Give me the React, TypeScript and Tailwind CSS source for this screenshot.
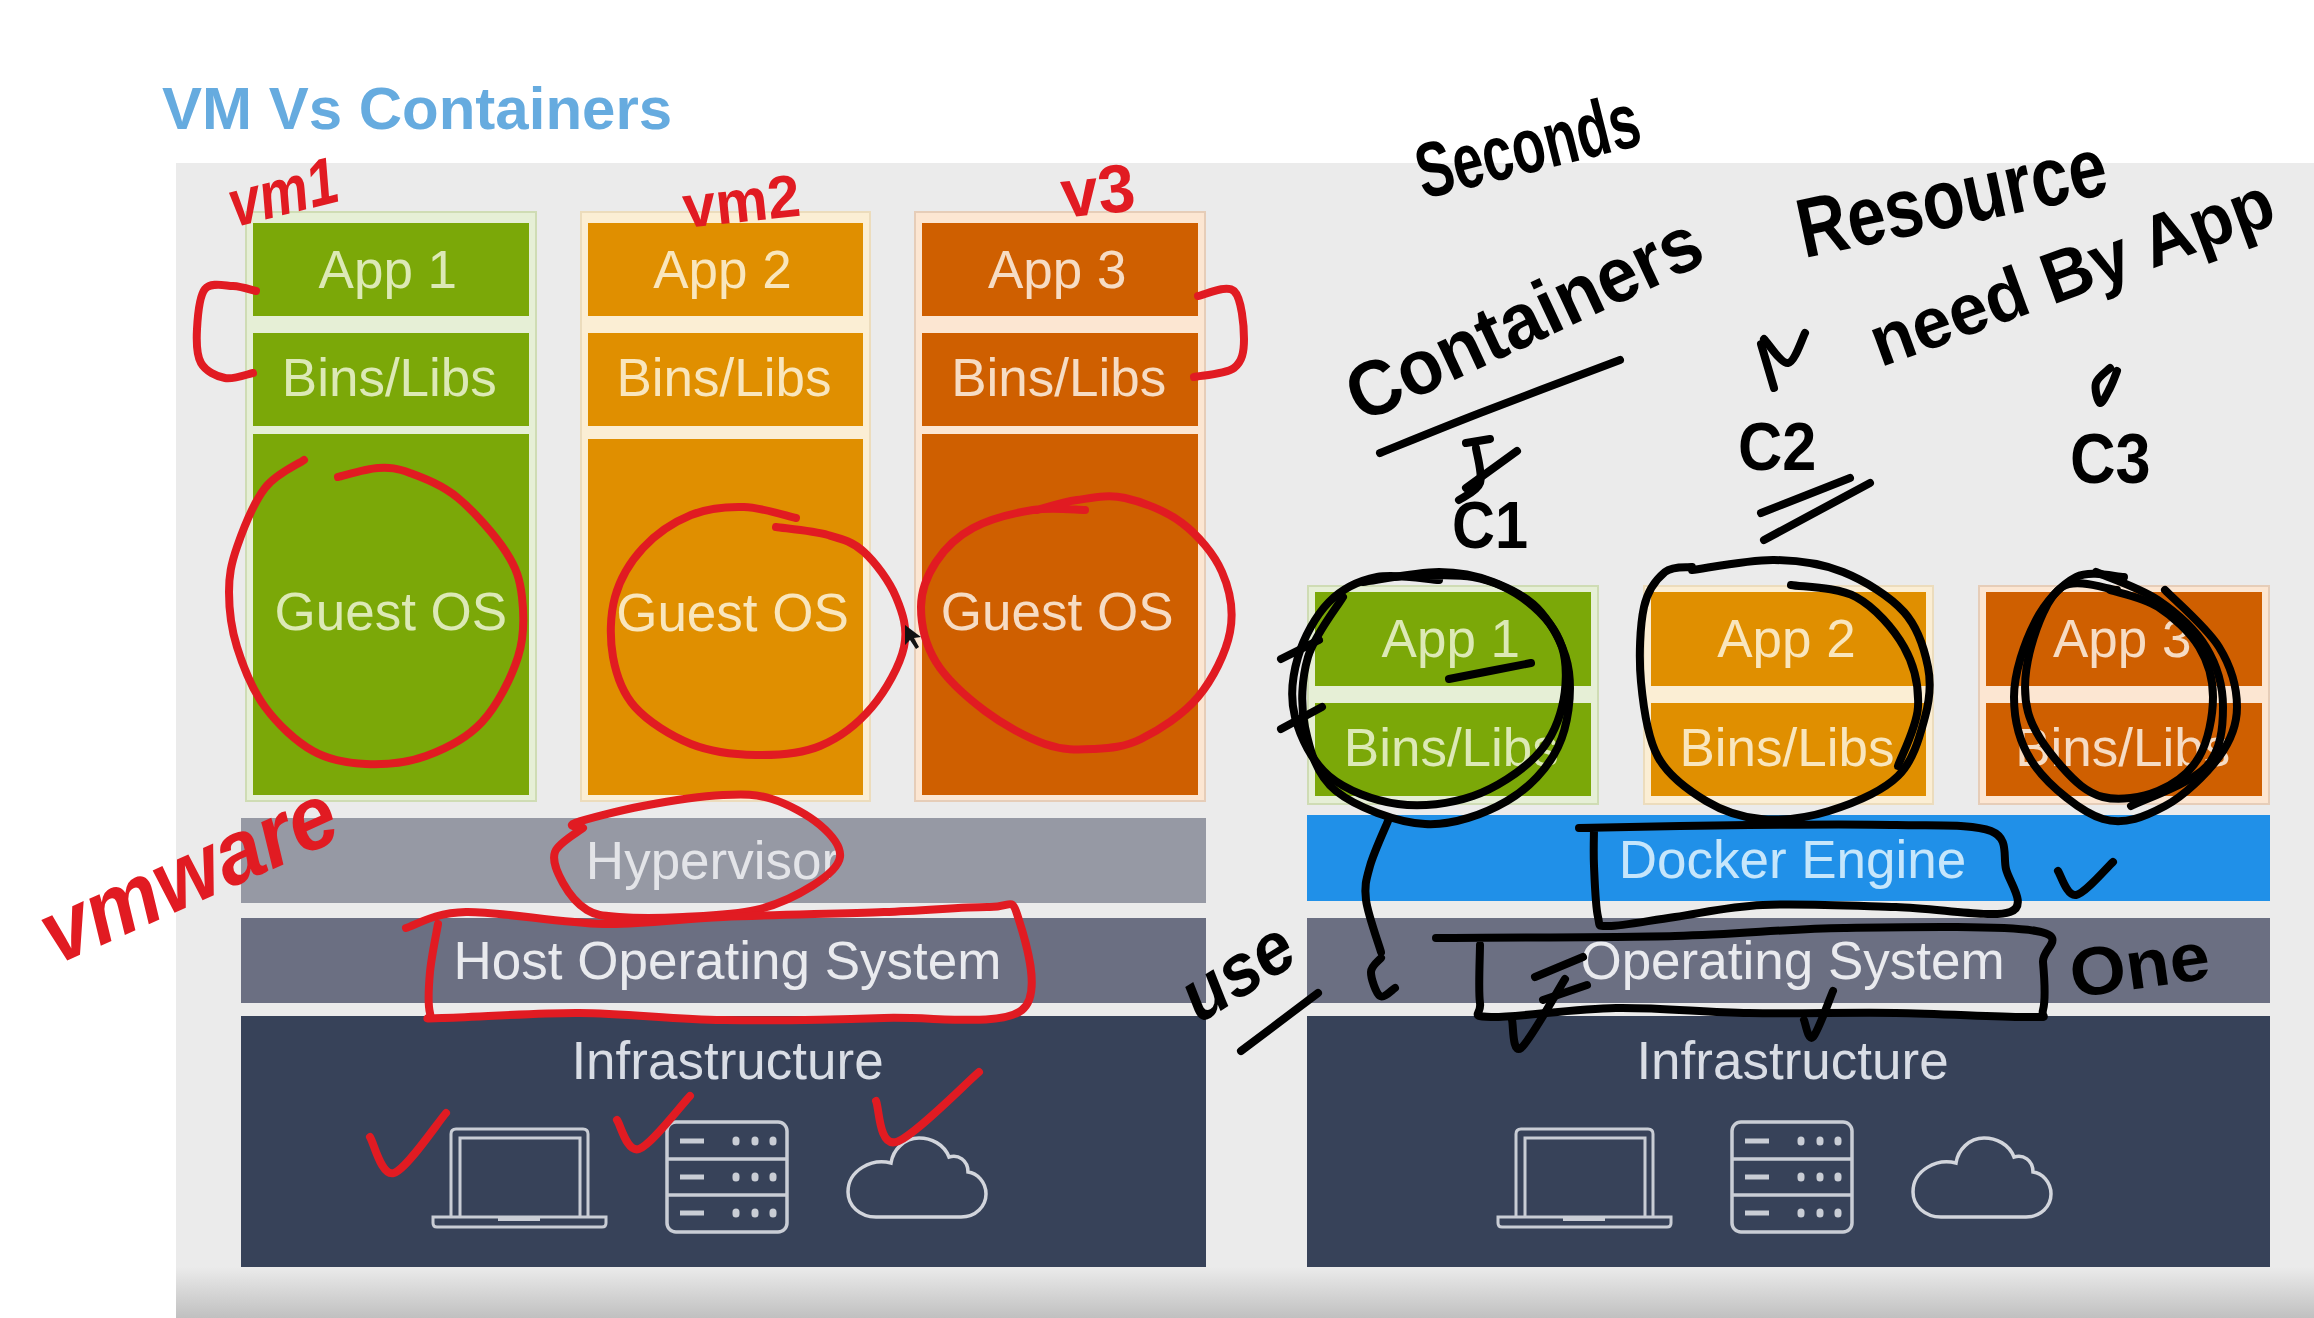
type Pt = [number, number];

// catmull-rom through the sampled ink points
const ink = (pts: Pt[]) => {
  let d = `M${pts[0][0]} ${pts[0][1]}`;
  for (let i = 0; i < pts.length - 1; i++) {
    const p0 = pts[i - 1] ?? pts[i];
    const p1 = pts[i];
    const p2 = pts[i + 1];
    const p3 = pts[i + 2] ?? p2;
    const c1x = p1[0] + (p2[0] - p0[0]) / 6;
    const c1y = p1[1] + (p2[1] - p0[1]) / 6;
    const c2x = p2[0] - (p3[0] - p1[0]) / 6;
    const c2y = p2[1] - (p3[1] - p1[1]) / 6;
    d += ` C${c1x} ${c1y} ${c2x} ${c2y} ${p2[0]} ${p2[1]}`;
  }
  return d;
};

const redStrokes: Pt[][] = [
  [[304,460],[265,488],[237,547],[229,592],[237,647],[265,707],[313,751],[366,764],[426,756],[482,722],[518,657],[522,597],[506,552],[458,498],[410,473],[378,468],[338,477]],
  [[796,518],[744,507],[691,515],[643,548],[615,597],[613,657],[635,707],[691,744],[756,755],[820,746],[872,707],[904,647],[896,597],[864,552],[828,535],[776,527]],
  [[1085,510],[1033,510],[973,528],[936,562],[921,607],[936,662],[985,711],[1045,744],[1093,749],[1141,739],[1198,697],[1230,632],[1222,572],[1182,523],[1125,498],[1077,500],[1037,510]],
  [[256,291],[233,286],[205,289],[197,329],[201,363],[225,378],[253,373]],
  [[1198,296],[1234,291],[1244,339],[1234,368],[1194,377]],
  [[583,828],[575,823],[643,806],[723,795],[772,799],[820,825],[840,857],[812,886],[756,910],[683,917],[619,917],[587,910],[563,883],[555,852],[583,828]],
  [[406,928],[466,912],[603,924],[723,917],[884,912],[989,907],[1017,914],[1022,1010],[884,1018],[723,1020],[579,1013],[442,1018],[430,1013],[430,972],[438,924]],
  [[370,1137],[394,1173],[446,1113]],
  [[617,1120],[639,1149],[690,1096]],
  [[876,1101],[896,1142],[979,1072]],
];

const blackStrokes: Pt[][] = [
  [[1380,453],[1480,413],[1620,360]],
  [[1761,513],[1850,478]],
  [[1764,540],[1870,483]],
  [[1466,443],[1490,439]],
  [[1476,448],[1480,483],[1459,500]],
  [[1517,451],[1466,488]],
  [[1761,344],[1774,388]],
  [[1764,339],[1788,363],[1805,333]],
  [[2110,368],[2096,383],[2100,403],[2110,388],[2117,371]],
  // c1 loops
  [[1439,580],[1377,577],[1329,602],[1298,657],[1295,717],[1329,776],[1398,804],[1473,796],[1535,757],[1562,707],[1562,647],[1528,602],[1473,577],[1391,577]],
  [[1343,597],[1308,657],[1305,727],[1336,791],[1425,824],[1507,801],[1558,747],[1569,672],[1541,612],[1493,582],[1439,572],[1363,582]],
  [[1281,659],[1319,640]],
  [[1281,729],[1322,707]],
  [[1449,679],[1531,663]],
  // c2 loops
  [[1692,567],[1665,572],[1644,607],[1641,682],[1658,757],[1706,801],[1761,819],[1829,811],[1898,776],[1925,717],[1928,667],[1904,612],[1843,572],[1774,560],[1692,570]],
  [[1791,585],[1856,597],[1904,647],[1918,707],[1898,766]],
  // c3 loops
  [[2124,577],[2076,577],[2035,622],[2014,697],[2035,766],[2103,819],[2165,806],[2219,757],[2237,707],[2219,647],[2165,590]],
  [[2117,590],[2062,587],[2031,647],[2028,712],[2062,767],[2103,797],[2158,791],[2199,757],[2213,697],[2199,647],[2158,607],[2110,590]],
  [[2096,572],[2158,600],[2206,647],[2223,707],[2206,767],[2131,806]],
  // docker engine box
  [[1579,828],[1749,825],[1896,825],[1991,831],[2006,869],[2010,912],[1896,907],[1763,905],[1675,917],[1609,926],[1598,917],[1594,866],[1594,828]],
  // operating system box
  [[1436,938],[1675,936],[1844,928],[2036,931],[2043,962],[2043,1010],[2028,1017],[1896,1013],[1749,1013],[1616,1008],[1491,1017],[1480,1003],[1480,945]],
  [[1535,977],[1583,957]],
  [[1543,1000],[1587,985]],
  [[1512,1020],[1521,1048],[1565,979]],
  [[1804,1020],[1813,1037],[1833,991]],
  [[2058,871],[2076,895],[2113,862]],
  [[1388,821],[1370,866],[1366,900],[1381,952]],
  [[1381,958],[1371,972],[1380,996],[1395,988]],
  [[1241,1051],[1318,993]],
];

const Laptop = () => (
  <svg width="177" height="103" viewBox="0 0 177 103" fill="none" stroke="#c9cdd5" strokeWidth="3">
    <path d="M20 91V8q0-5 5-5h127q5 0 5 5v83" />
    <path d="M29 91V12h120v79" />
    <path d="M2 91h173v6q0 4-4 4H6q-4 0-4-4z" />
    <path d="M67 93h42" strokeWidth="4" />
  </svg>
);

const Server = () => (
  <svg width="124" height="114" viewBox="0 0 124 114" fill="none" stroke="#c9cdd5" strokeWidth="3.5">
    <rect x="2" y="2" width="120" height="110" rx="9" />
    <path d="M2 39h120M2 75h120" />
    <path d="M15 21h24M15 57h24M15 93h24" strokeWidth="5" />
    <path d="M71 20v2M90 20v2M108 20v2M71 56v2M90 56v2M108 56v2M71 92v2M90 92v2M108 92v2" strokeWidth="7" strokeLinecap="round" />
  </svg>
);

const Cloud = () => (
  <svg width="142" height="83" viewBox="0 0 142 83" fill="none" stroke="#d2d5dc" strokeWidth="3.5">
    <path d="M30 81h85c15 0 25-11 25-23 0-12-9-21-18-22 0-12-10-18-19-15C98 8 85 2 73 2 58 2 47 14 45 27 26 22 2 34 2 56c0 14 12 25 28 25z" />
  </svg>
);

const Infra = () => (
  <div className="mt-[13px] h-[251px] flex flex-col items-center bg-[#374259] pt-[15px]">
    <div className="h-[60px] leading-[60px] pl-[8px] text-[53px] text-[#d9dde5]">Infrastructure</div>
    <div className="mt-[29px] pr-[28px] flex items-center gap-[57px] h-[114px]">
      <Laptop />
      <Server />
      <Cloud />
    </div>
  </div>
);

const Bar = ({ className, children }: { className: string; children: string }) => (
  <div className={`flex items-center justify-center text-[53px] ${className}`}>{children}</div>
);

const themes = {
  green: "border-[#cfdcb4] bg-[#e6efd6] [&>div]:bg-[#7ba808] [&>div]:text-[#dce9b6]",
  amber: "border-[#ecdcbc] bg-[#fbeed4] [&>div]:bg-[#e08f00] [&>div]:text-[#f9e6bd]",
  rust: "border-[#e6cdb8] bg-[#fce6d2] [&>div]:bg-[#cf5f00] [&>div]:text-[#f6dcc4]",
};

const Cell = ({ className, children }: { className: string; children: string }) => (
  <div className={`flex items-center justify-center text-[53px] ${className}`}>{children}</div>
);

const VmStack = ({ theme, guest }: { theme: keyof typeof themes; guest: string }) => (
  <div className={`w-[292px] h-[591px] border-2 px-[6px] pt-[10px] flex flex-col ${themes[theme]}`}>
    <Cell className="h-[93px] pr-[6px]">{`App ${theme === "green" ? 1 : theme === "amber" ? 2 : 3}`}</Cell>
    <Cell className="h-[93px] mt-[17px] pb-[4px] pr-[3px]">Bins/Libs</Cell>
    <Cell className={guest}>Guest OS</Cell>
  </div>
);

const ContainerStack = ({ theme, label }: { theme: keyof typeof themes; label: string }) => (
  <div className={`w-[292px] h-[220px] border-2 px-[6px] pt-[5px] flex flex-col ${themes[theme]}`}>
    <Cell className="h-[94px] pr-[4px]">{label}</Cell>
    <Cell className="h-[93px] mt-[17px] pb-[3px] pr-[3px]">Bins/Libs</Cell>
  </div>
);

export default function App() {
  return (
    <div className="relative w-[2314px] h-[1318px] overflow-hidden bg-white font-['Liberation_Sans',Arial,sans-serif]">
      <h1 className="pl-[162px] pt-[76px] h-[163px] text-[60px] leading-[66px] font-bold text-[#66abdf]">VM Vs Containers</h1>

      <div className="ml-[176px] h-[1155px] pl-[65px] pt-[48px] flex gap-[101px] bg-[linear-gradient(to_bottom,#ebebeb_0,#ebebeb_1104px,#c0c0c0_100%)] blur-[0.7px]">
        <div className="w-[965px] flex flex-col">
          <div className="pl-[4px] flex gap-[43px]">
            <VmStack theme="green" guest="h-[361px] mt-[8px] pb-[6px]" />
            <VmStack theme="amber" guest="h-[356px] mt-[13px] pb-[8px] pl-[14px]" />
            <VmStack theme="rust" guest="h-[361px] mt-[8px] pb-[6px] pr-[6px]" />
          </div>
          <Bar className="mt-[16px] h-[85px] pr-[22px] bg-[#9699a4] text-[#e3e4e8]">Hypervisor</Bar>
          <Bar className="mt-[15px] h-[85px] pl-[8px] bg-[#6b6f82] text-[#e9eaee]">Host Operating System</Bar>
          <Infra />
        </div>

        <div className="w-[963px] flex flex-col pt-[374px]">
          <div className="flex gap-[44px]">
            <ContainerStack theme="green" label="App 1" />
            <ContainerStack theme="amber" label="App 2" />
            <ContainerStack theme="rust" label="App 3" />
          </div>
          <Bar className="mt-[10px] h-[86px] pl-[8px] pt-[3px] bg-[#2090e8] text-[#c6e6fb]">Docker Engine</Bar>
          <Bar className="mt-[17px] h-[85px] pl-[8px] bg-[#6b6f82] text-[#e9eaee]">Operating System</Bar>
          <Infra />
        </div>
      </div>

      <svg className="absolute inset-0 pointer-events-none" width="2314" height="1318" viewBox="0 0 2314 1318" fill="none" strokeLinecap="round" strokeLinejoin="round">
        {redStrokes.map((s, i) => (
          <path key={i} d={ink(s)} stroke="#e11b22" strokeWidth="8" />
        ))}
        {blackStrokes.map((s, i) => (
          <path key={i} d={ink(s)} stroke="#000" strokeWidth="8" />
        ))}
        <path d="M905 625l0 20 5-5 6 9 3-2-5-9 7-1z" fill="#111" />
      </svg>

      {/* handwritten notes */}
      <span className="absolute left-[229px] top-[172px] text-[66px] leading-none font-bold italic text-[#e11b22] -rotate-[14deg] scale-x-[0.84] origin-left">vm1</span>
      <span className="absolute left-[683px] top-[178px] text-[60px] leading-none font-bold text-[#e11b22] -rotate-[6deg] scale-x-[0.98] origin-left">vm2</span>
      <span className="absolute left-[1061px] top-[160px] text-[68px] leading-none font-bold text-[#e11b22] -rotate-[6deg] scale-x-[0.98] origin-left">v3</span>
      <span className="absolute left-[44px] top-[892px] text-[90px] leading-none font-bold italic text-[#e11b22] -rotate-[24deg] scale-x-[0.94] origin-left">vmware</span>

      <span className="absolute left-[1417px] top-[134px] text-[78px] leading-none font-bold text-black -rotate-[14deg] scale-x-[0.7] origin-left">Seconds</span>
      <span className="absolute left-[1350px] top-[360px] text-[78px] leading-none font-bold text-black -rotate-[25deg] scale-x-[0.94] origin-left">Containers</span>
      <span className="absolute left-[1798px] top-[188px] text-[84px] leading-none font-bold text-black -rotate-[12deg] scale-x-[0.82] origin-left">Resource</span>
      <span className="absolute left-[1872px] top-[308px] text-[72px] leading-none font-bold text-black -rotate-[20deg] scale-x-[0.97] origin-left">need By App</span>
      <span className="absolute left-[1452px] top-[492px] text-[66px] leading-none font-bold text-black scale-x-[0.9] origin-left">C1</span>
      <span className="absolute left-[1738px] top-[412px] text-[68px] leading-none font-bold text-black scale-x-[0.9] origin-left">C2</span>
      <span className="absolute left-[2070px] top-[424px] text-[70px] leading-none font-bold text-black scale-x-[0.9] origin-left">C3</span>
      <span className="absolute left-[1186px] top-[966px] text-[74px] leading-none font-bold italic text-black -rotate-[32deg] scale-x-[0.94] origin-left">use</span>
      <span className="absolute left-[2070px] top-[940px] text-[68px] leading-none font-bold text-black -rotate-[8deg] scale-x-[1.06] origin-left">One</span>
    </div>
  );
}
